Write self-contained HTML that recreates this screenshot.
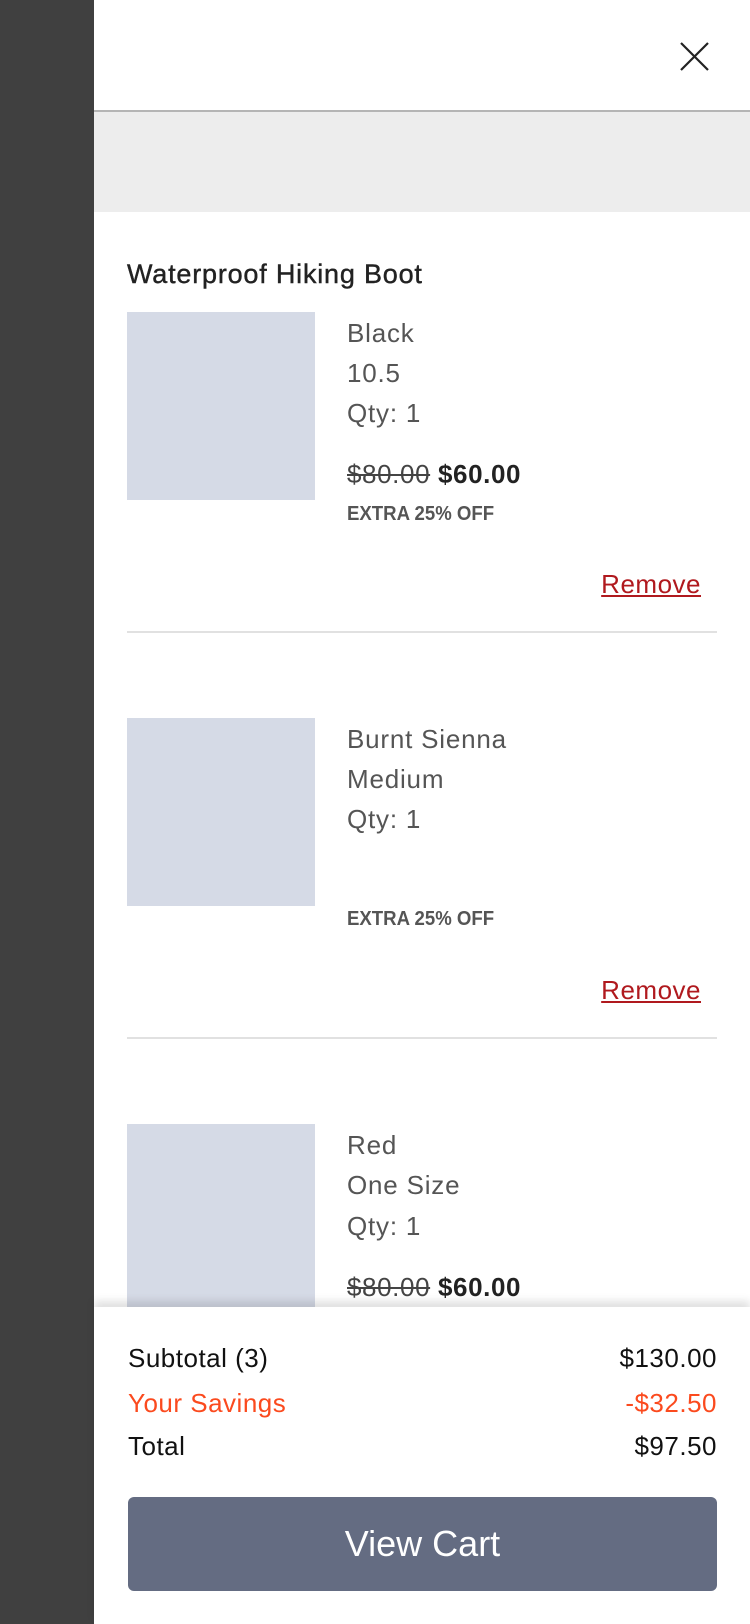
<!DOCTYPE html>
<html><head><meta charset="utf-8"><style>
*{margin:0;padding:0;box-sizing:border-box}
body{width:750px;height:1624px;position:relative;overflow:hidden;background:#fff;font-family:"Liberation Sans",Arial,sans-serif}
.dark{position:absolute;left:0;top:0;width:94px;height:1624px;background:#404040}
.abs{position:absolute;white-space:nowrap}
.hdrline{position:absolute;left:94px;right:0;top:110px;height:2px;background:#b5b5b5}
.band{position:absolute;left:94px;right:0;top:112px;height:100px;background:#ededed}
.img{position:absolute;left:127px;width:188px;height:188px;background:#d5dae6}
.t{position:absolute;left:347px;font-size:26px;letter-spacing:.8px;color:#555;line-height:28px;white-space:nowrap}
.price{position:absolute;left:347px;font-size:26px;letter-spacing:.6px;color:#222;line-height:28px;white-space:nowrap}
.price s{color:#444}
.price b{font-weight:bold}
.extra{position:absolute;left:347px;font-size:20px;font-weight:bold;color:#555;transform:scaleX(.93);transform-origin:left;line-height:22px;white-space:nowrap}
.rm{position:absolute;right:49px;font-size:26px;letter-spacing:.5px;color:#b0191e;text-decoration:underline;line-height:28px}
.div{position:absolute;left:127px;width:590px;height:2px;background:#e1e1e1}
.foot{position:absolute;left:94px;right:0;top:1307px;bottom:0;background:#fff;box-shadow:0 -6px 8px rgba(0,0,0,.12)}
.row{position:absolute;left:128px;right:33px;font-size:26px;letter-spacing:.5px;line-height:28px;color:#111;display:flex;justify-content:space-between}
.btn{position:absolute;left:128px;top:1497px;width:589px;height:94px;background:#646c82;border-radius:6px;color:#fff;font-size:36px;text-align:center;line-height:94px}
</style></head><body>
<div class="dark"></div>
<svg class="abs" style="left:679px;top:41px" width="31" height="31" viewBox="0 0 31 31"><path d="M2 2L29 29M29 2L2 29" stroke="#222" stroke-width="2.2" fill="none"/></svg>
<div class="hdrline"></div>
<div class="band"></div>
<div class="abs" style="left:127px;top:259px;font-size:27px;letter-spacing:.8px;color:#222;line-height:30px;-webkit-text-stroke:.4px #222">Waterproof Hiking Boot</div>

<div class="img" style="top:312px"></div>
<div class="t" style="top:319px">Black</div>
<div class="t" style="top:359px">10.5</div>
<div class="t" style="top:399px">Qty: 1</div>
<div class="price" style="top:460px"><s>$80.00</s> <b>$60.00</b></div>
<div class="extra" style="top:503px">EXTRA 25% OFF</div>
<div class="rm" style="top:570px">Remove</div>
<div class="div" style="top:631px"></div>

<div class="img" style="top:718px"></div>
<div class="t" style="top:725px">Burnt Sienna</div>
<div class="t" style="top:765px">Medium</div>
<div class="t" style="top:805px">Qty: 1</div>
<div class="extra" style="top:908px">EXTRA 25% OFF</div>
<div class="rm" style="top:976px">Remove</div>
<div class="div" style="top:1037px"></div>

<div class="img" style="top:1124px"></div>
<div class="t" style="top:1131px">Red</div>
<div class="t" style="top:1171px">One Size</div>
<div class="t" style="top:1212px">Qty: 1</div>
<div class="price" style="top:1273px"><s>$80.00</s> <b>$60.00</b></div>

<div class="foot"></div>
<div class="row" style="top:1344px"><span>Subtotal (3)</span><span>$130.00</span></div>
<div class="row" style="top:1389px;color:#fb4a1e"><span>Your Savings</span><span>-$32.50</span></div>
<div class="row" style="top:1432px"><span>Total</span><span>$97.50</span></div>
<div class="btn">View Cart</div>
</body></html>
